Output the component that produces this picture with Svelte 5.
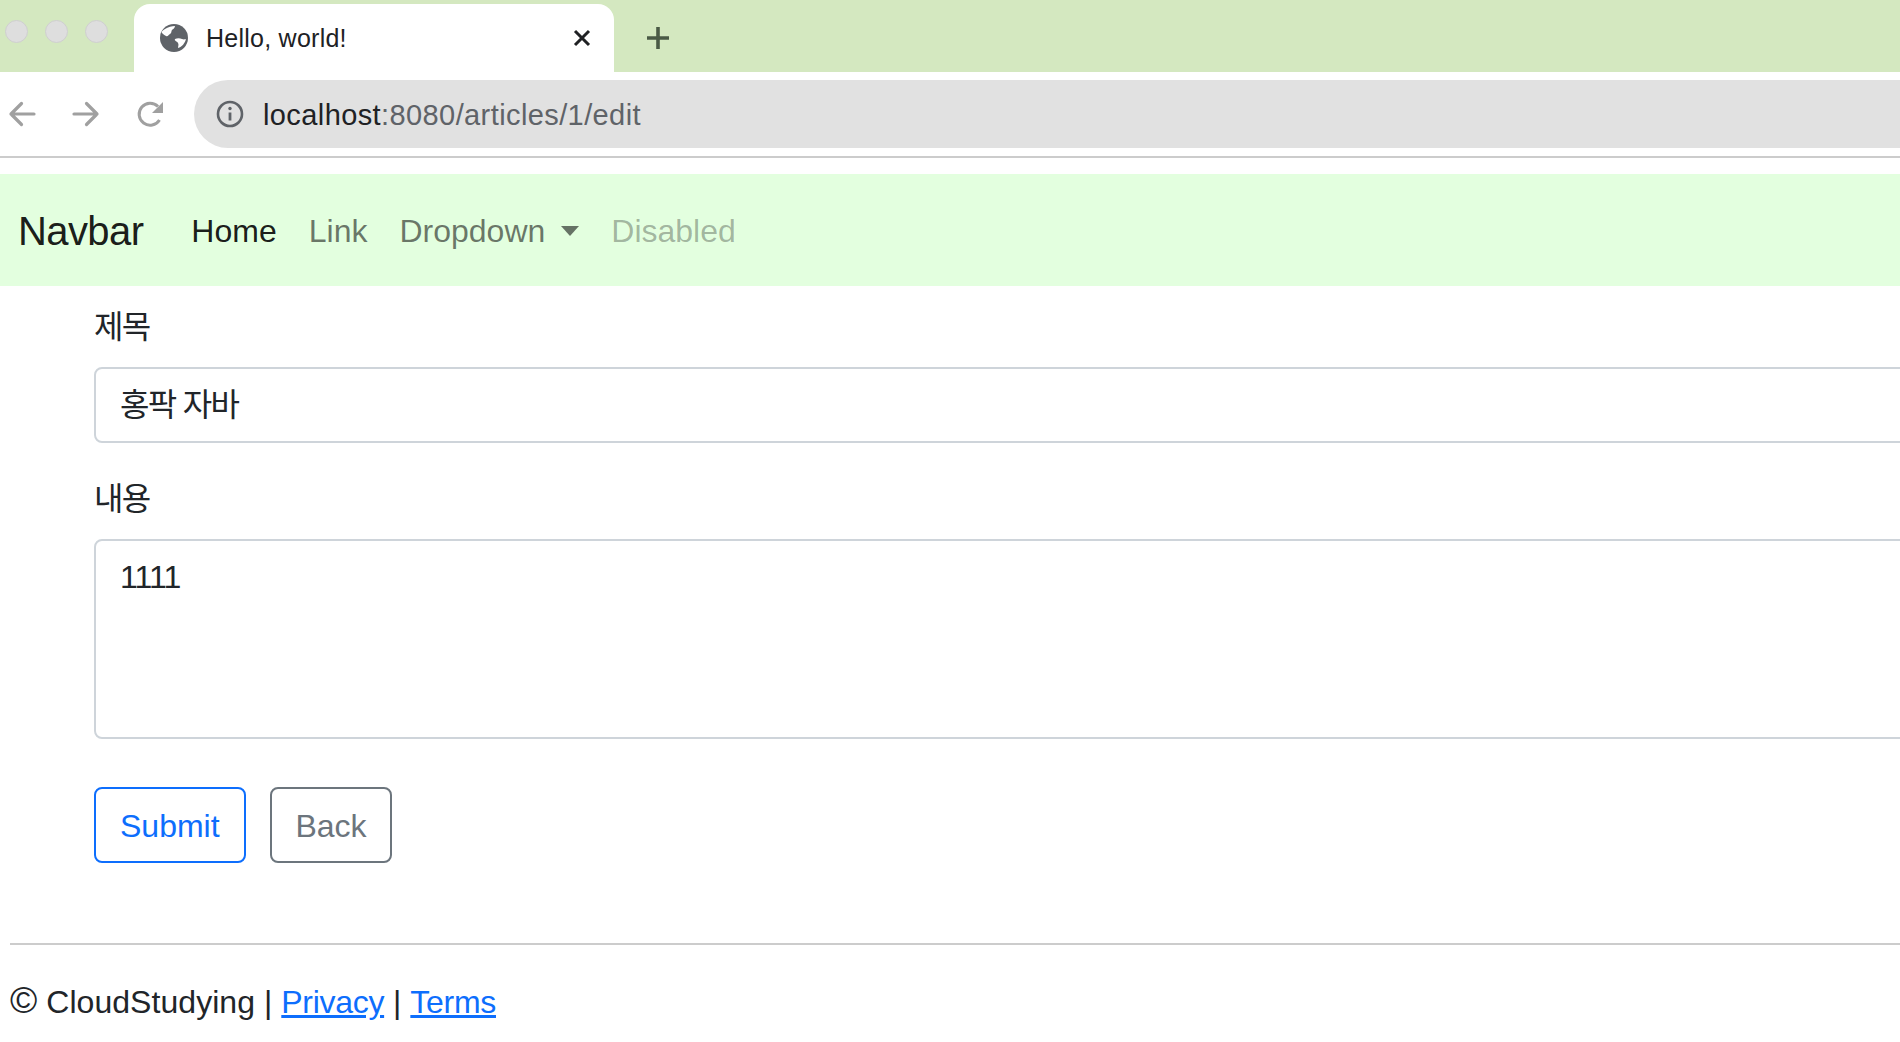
<script>
	const navLinks = [
		{ label: 'Home', state: 'active' },
		{ label: 'Link', state: '' },
		{ label: 'Dropdown', state: 'dropdown' },
		{ label: 'Disabled', state: 'disabled' }
	];
</script>

<div class="chrome">
	<div class="tabstrip">
		<div class="lights">
			<span class="light"></span>
			<span class="light"></span>
			<span class="light"></span>
		</div>
		<div class="tab">
			<svg class="globe" viewBox="0 0 28 28" width="28" height="28">
				<circle cx="14" cy="14" r="14" fill="#5f6368" />
				<path d="M5 5c3-2 7-3 10-3 0 2-2 3-3 4s0 3-2 4-2 3-4 2-3-2-4-3 1-3 3-4z" fill="#fff" />
				<path d="M15 15c2-1 5-1 7 0s4 0 4 0c-1 4-4 8-8 9 0-2 1-3 0-5s-4-2-3-4z" fill="#fff" />
			</svg>
			<span class="tab-title">Hello, world!</span>
			<svg class="close" viewBox="0 0 18 18" width="18" height="18">
				<path d="M2 2l14 14M16 2L2 16" stroke="#202124" stroke-width="3" fill="none" />
			</svg>
		</div>
		<svg class="plus" viewBox="0 0 24 24" width="24" height="24">
			<path d="M12 1v22M1 12h22" stroke="#4a5a45" stroke-width="3.6" fill="none" />
		</svg>
	</div>

	<div class="toolbar">
		<svg class="nav-icon" viewBox="0 0 28 28" width="28" height="28">
			<path d="M26 14H3M13.5 3.5L3 14l10.5 10.5" stroke="#a0a0a0" stroke-width="3.2" stroke-linecap="round" stroke-linejoin="round" fill="none" />
		</svg>
		<svg class="nav-icon" viewBox="0 0 28 28" width="28" height="28">
			<path d="M2 14h23M14.5 3.5L25 14 14.5 24.5" stroke="#a0a0a0" stroke-width="3.2" stroke-linecap="round" stroke-linejoin="round" fill="none" />
		</svg>
		<svg class="nav-icon" viewBox="0 0 28 28" width="28" height="28">
			<path d="M23.5 20A11 11 0 1 1 22 6.5" stroke="#a0a0a0" stroke-width="3" fill="none" />
			<path d="M27 2v11H16z" fill="#a0a0a0" />
		</svg>
		<div class="omnibox">
			<svg viewBox="0 0 28 28" width="28" height="28">
				<circle cx="14" cy="14" r="12" stroke="#5f6368" stroke-width="2.6" fill="none" />
				<path d="M14 12.5v8" stroke="#5f6368" stroke-width="2.8" />
				<circle cx="14" cy="8.5" r="1.7" fill="#5f6368" />
			</svg>
			<span class="url"><span class="host">localhost</span>:8080/articles/1/edit</span>
		</div>
	</div>
</div>

<nav class="navbar">
	<a class="brand" href="#top">Navbar</a>
	<ul class="nav">
		{#each navLinks as link}
			<li class="nav-link {link.state}">{link.label}</li>
		{/each}
	</ul>
</nav>

<main class="container">
	<form>
		<div class="field">
			<label for="title">제목</label>
			<input id="title" value="홍팍 자바" />
		</div>
		<div class="field">
			<label for="content">내용</label>
			<textarea id="content">1111</textarea>
		</div>
		<div class="actions">
			<button type="button" class="btn primary">Submit</button>
			<button type="button" class="btn secondary">Back</button>
		</div>
	</form>
</main>

<footer>
	<hr />
	<p><span class="copy">©</span> CloudStudying | <a href="#top">Privacy</a> | <a href="#top">Terms</a></p>
</footer>

<style>
	:global(body) {
		margin: 0;
		background: #fff;
		overflow: hidden;
		font-family: 'Liberation Sans', 'Noto Sans CJK KR', sans-serif;
		color: #212529;
	}

	.chrome {
		height: 158px;
		box-sizing: border-box;
		border-bottom: 2px solid #cccccc;
	}

	.tabstrip {
		height: 72px;
		background: #d4e8c0;
		display: flex;
		align-items: flex-end;
	}

	.lights {
		display: flex;
		gap: 17px;
		width: 134px;
		box-sizing: border-box;
		padding: 0 0 29px 5px;
		align-self: flex-end;
	}

	.light {
		width: 23px;
		height: 23px;
		border-radius: 50%;
		background: #dedede;
		border: 1px solid #cfcfcf;
		box-sizing: border-box;
	}

	.tab {
		width: 480px;
		height: 68px;
		box-sizing: border-box;
		background: #fff;
		border-radius: 16px 16px 0 0;
		display: flex;
		align-items: center;
		padding: 0 23px 0 26px;
		color: #202124;
	}

	.tab-title {
		margin-left: 18px;
		font-size: 25px;
		letter-spacing: 0.25px;
		flex: 1;
	}

	.plus {
		margin: 0 0 22px 32px;
	}

	.toolbar {
		height: 84px;
		display: flex;
		align-items: center;
		padding-left: 8px;
		gap: 36px;
	}

	.omnibox {
		flex: 1;
		height: 68px;
		background: #e1e1e1;
		border-radius: 34px 0 0 34px;
		display: flex;
		align-items: center;
		padding-left: 22px;
		margin-left: -6px;
		gap: 19px;
		font-size: 29px;
		letter-spacing: 0.4px;
		color: #5f6368;
	}

	.url {
		padding-top: 2px;
	}

	.host {
		color: #202124;
	}

	.navbar {
		margin-top: 16px;
		height: 112px;
		box-sizing: border-box;
		padding: 2px 0 0 18px;
		background: #e3ffdf;
		display: flex;
		align-items: center;
	}

	.brand {
		font-size: 40px;
		letter-spacing: -0.6px;
		color: rgba(0, 0, 0, 0.9);
		text-decoration: none;
		margin-right: 32px;
	}

	.nav {
		display: flex;
		list-style: none;
		margin: 0;
		padding: 0;
	}

	.nav-link {
		font-size: 32px;
		padding: 0 16px;
		color: rgba(0, 0, 0, 0.55);
	}

	.nav-link.active {
		color: rgba(0, 0, 0, 0.9);
	}

	.nav-link.disabled {
		color: rgba(0, 0, 0, 0.3);
	}

	.nav-link.dropdown::after {
		content: '';
		display: inline-block;
		margin-left: 16px;
		vertical-align: 6px;
		border-top: 10px solid;
		border-left: 9px solid transparent;
		border-right: 9px solid transparent;
	}

	.container {
		padding: 17px 0 0 94px;
		margin-right: -40px;
	}

	.field {
		margin-bottom: 32px;
	}

	label {
		display: block;
		font-size: 32px;
		line-height: 48px;
		letter-spacing: -1.8px;
		margin-bottom: 16px;
	}

	input,
	textarea {
		display: block;
		width: 100%;
		box-sizing: border-box;
		font: inherit;
		font-size: 32px;
		line-height: 48px;
		color: #212529;
		padding: 12px 24px;
		border: 2px solid #ced4da;
		border-radius: 8px;
		background: #fff;
		outline: none;
	}

	input {
		height: 76px;
		padding: 8px 24px 15px;
		letter-spacing: -1.7px;
	}

	textarea {
		height: 200px;
		resize: none;
		letter-spacing: -0.9px;
	}

	.actions {
		display: flex;
		gap: 24px;
		padding-top: 16px;
	}

	.btn {
		height: 76px;
		box-sizing: border-box;
		padding: 2px 24px 0;
		font: inherit;
		font-size: 32px;
		background: #fff;
		border-radius: 8px;
		border: 2px solid;
	}

	.primary {
		color: #0d6efd;
		border-color: #0d6efd;
	}

	.secondary {
		color: #6c757d;
		border-color: #6c757d;
		letter-spacing: -0.1px;
	}

	footer {
		padding: 80px 0 0 10px;
	}

	hr {
		height: 2px;
		margin: 0 0 33px;
		border: none;
		background: #cccccc;
	}

	footer p {
		margin: 0;
		font-size: 32px;
		line-height: 48px;
		letter-spacing: 0.05px;
	}

	.copy {
		font-size: 37px;
		line-height: 1;
	}

	footer a {
		color: #0d6efd;
		letter-spacing: -0.3px;
	}
</style>
